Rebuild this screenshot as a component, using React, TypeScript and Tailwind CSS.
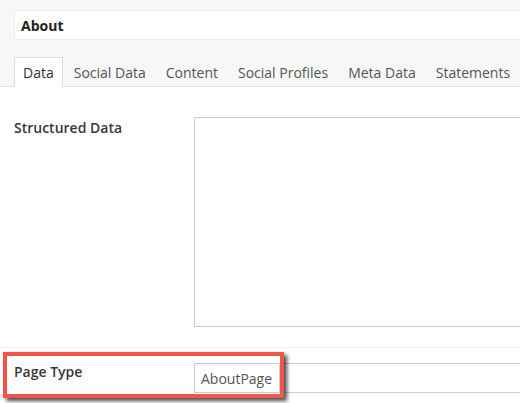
import React from "react";

const tabs = ["Data", "Social Data", "Content", "Social Profiles", "Meta Data", "Statements"];

export default function App() {
  return (
    <div
      className="relative w-[520px] h-[403px] overflow-hidden bg-white"
      style={{ fontFamily: '"Open Sans", "Liberation Sans", sans-serif' }}
    >
      <div className="w-[600px]">
        <div className="bg-[#f7f7f7] pt-[10px] pl-[14px] border-b border-[#dddddd]">
          <div className="h-[30px] bg-white border border-[#ececec] flex items-center pl-[6px] text-[14px] font-bold text-[#222]">
            About
          </div>
          <div className="flex gap-[2px] mt-[17px] -mb-px">
            {tabs.map((t, i) => (
              <div
                key={t}
                className={
                  i === 0
                    ? "h-[30px] px-[8px] flex items-center text-[14px] text-[#333] bg-white border border-[#dddddd] border-b-white"
                    : "h-[30px] px-[8px] flex items-center text-[14px] text-[#555] border border-transparent"
                }
              >
                {t}
              </div>
            ))}
          </div>
        </div>
        <div className="pt-[30px]">
          <div className="flex pl-[14px]">
            <div className="w-[180px] pt-[1px] text-[14px] leading-[20px] font-semibold text-[#383838]">
              Structured Data
            </div>
            <div className="flex-1 h-[210px] border border-[#cccccc]" />
          </div>
          <div className="mt-[20px] border-t border-[#f0f0f0] pt-[15px] flex pl-[14px]">
            <div className="w-[180px] text-[14px] leading-[20px] font-semibold text-[#383838]">
              Page Type
            </div>
            <div className="flex-1 h-[30px] border border-[#cccccc] flex items-center pl-[6px] text-[14px] text-[#555]">
              AboutPage
            </div>
          </div>
        </div>
      </div>
      <div className="absolute left-[3px] top-[352px] w-[281px] h-[46px] border-[4px] border-[#f2554b] bg-white shadow-[3px_3px_4px_rgba(0,0,0,0.7)] flex">
        <div className="pl-[7px] pt-[6px] text-[14px] leading-[20px] font-semibold text-[#383838] w-[187px]">
          Page Type
        </div>
        <div className="mt-[7px] h-[30px] flex-1 border border-[#cccccc] flex items-center pl-[6px] text-[14px] text-[#555]">
          AboutPage
        </div>
      </div>
    </div>
  );
}
